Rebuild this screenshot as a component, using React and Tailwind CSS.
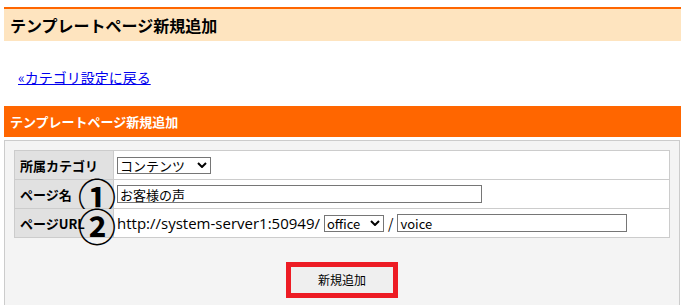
import React from 'react';

const JP = { fontFamily: '"Noto Sans CJK JP", "Liberation Sans", sans-serif' };

const Chevron = () => (
  <svg viewBox="0 0 10 6" className="h-[6px] w-[10px] shrink-0">
    <path d="M1 1 L5 5 L9 1" fill="none" stroke="#000" strokeWidth="2" />
  </svg>
);

const FakeSelect = ({ value, className }) => (
  <div className={`flex items-center justify-between border border-[#767676] bg-white pl-[2px] pr-[3px] ${className}`}>
    <span className="whitespace-nowrap leading-none">{value}</span>
    <Chevron />
  </div>
);

const App = () => {
  return (
    <div className="relative h-[305px] w-[681px] overflow-hidden bg-white text-black" style={JP}>
      {/* page title */}
      <div className="ml-1 mt-[7px] flex h-[34px] items-center border-t-2 border-[#ff6600] bg-[#fee4bf] pl-[6px]">
        <h1 className="text-[16px] font-bold leading-none">テンプレートページ新規追加</h1>
      </div>

      <div className="pl-[18px] pt-[28px] pb-[21px] text-[14px] leading-[16px]">
        <a href="#" className="text-[#0000ee] underline">«カテゴリ設定に戻る</a>
      </div>

      {/* section bar */}
      <div className="ml-1 flex h-[31px] items-center bg-[#ff6600] pl-[6px]">
        <h2 className="text-[13px] font-bold leading-none text-white">テンプレートページ新規追加</h2>
      </div>

      <div className="ml-1 mr-[1px] mt-[3px] h-[200px] border border-[#cccccc] bg-[#f4f4f4] px-[9px] pt-[9px]">
        <table className="w-full border-collapse bg-white text-[13px] leading-none">
          <tbody>
            <tr className="h-[29px]">
              <th className="w-[99px] border border-[#cccccc] bg-[#e1e1e1] p-0 pl-[5px] text-left font-bold">所属カテゴリ</th>
              <td className="border border-[#cccccc] p-0 pl-[3px]">
                <FakeSelect value="コンテンツ" className="h-[17px] w-[94px] text-[13px]" />
              </td>
            </tr>
            <tr className="h-[29px]">
              <th className="relative w-[99px] border border-[#cccccc] bg-[#e1e1e1] p-0 pl-[5px] text-left font-bold">
                ページ名
                <span className="absolute left-[63px] top-[-3px] text-[38px] font-bold leading-[36px]">①</span>
              </th>
              <td className="border border-[#cccccc] p-0 pl-[3px]">
                <div className="flex h-[18px] w-[365px] items-center border border-[#767676] pl-[2px] text-[13px]">お客様の声</div>
              </td>
            </tr>
            <tr className="h-[29px]">
              <th className="relative w-[99px] border border-[#cccccc] bg-[#e1e1e1] p-0 pl-[5px] text-left font-bold">
                ページURL
                <span className="absolute left-[63px] top-[-2px] text-[38px] font-bold leading-[36px]">②</span>
              </th>
              <td className="border border-[#cccccc] p-0 pl-[3px]">
                <div className="flex items-center">
                  <span className="whitespace-nowrap text-[15px]" style={{ fontFamily: '"Open Sans", sans-serif' }}>http://system-server1:50949/</span>
                  <FakeSelect value="office" className="ml-[4px] h-[17px] w-[60px] text-[13px]" />
                  <span className="mx-[4px] text-[14px]">/</span>
                  <div className="flex h-[18px] w-[230px] items-center border border-[#767676] pl-[2px] text-[13px]">voice</div>
                </div>
              </td>
            </tr>
          </tbody>
        </table>

        <div className="mt-[24px] flex justify-center">
          <div className="border-[5px] border-[#ed1c24]">
            <button className="flex h-[26px] w-[102px] items-center justify-center bg-[#efefef] text-[12px]">新規追加</button>
          </div>
        </div>
      </div>
    </div>
  );
};

export default App;
